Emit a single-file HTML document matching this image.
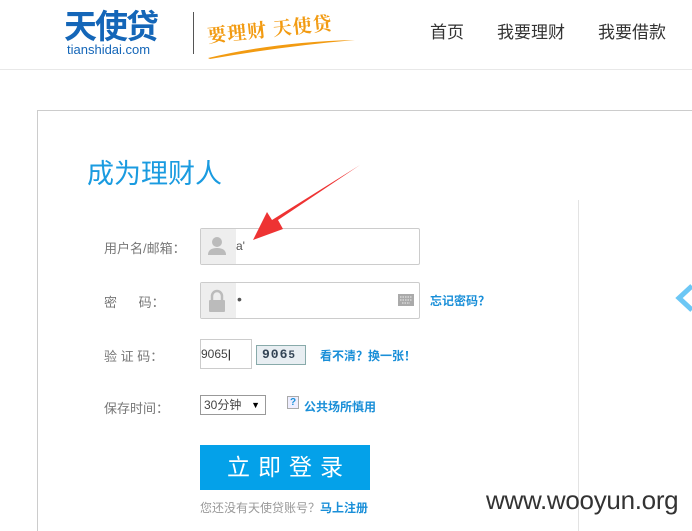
<!DOCTYPE html>
<html style="width:692px;height:531px;overflow:hidden"><head><meta charset="utf-8"><style>
*{margin:0;padding:0;box-sizing:border-box}
body{width:692px;height:531px;overflow:hidden;background:#fff;position:relative;font-family:"Liberation Sans","Noto Sans CJK SC",sans-serif;color:#666}
.a{position:absolute;white-space:nowrap}
.lbl{font-size:13px;color:#777}
.box{position:absolute;border:1px solid #ccc;border-radius:2px;background:#fff}
.ic{position:absolute;left:0;top:0;bottom:0;width:35px;background:#eee}
.lnk{color:#1a8fd8;font-size:12px;font-weight:bold}
</style></head><body>
<div class="a" style="left:64px;top:6px;font-size:33px;font-weight:bold;color:#1466b8;letter-spacing:-2px;font-family:'Noto Sans CJK SC',sans-serif;line-height:36px">天使贷</div>
<div class="a" style="left:67px;top:43px;font-size:13px;color:#1466b8;line-height:14px">tianshidai.com</div>
<div class="a" style="left:193px;top:12px;width:1px;height:42px;background:#555"></div>
<div class="a" style="left:207px;top:15px;font-size:19px;color:#f29b12;font-family:'Noto Serif CJK SC',serif;font-weight:bold;transform:rotate(-6deg);letter-spacing:1px">要理财 天使贷</div>
<svg class="a" style="left:205px;top:30px" width="150" height="30"><path d="M3 28 Q70 12 150 10 Q80 16 5 29Z" fill="#f29b12"/></svg>
<div class="a" style="left:430px;top:18px;font-size:17px;color:#333">首页</div>
<div class="a" style="left:497px;top:18px;font-size:17px;color:#333">我要理财</div>
<div class="a" style="left:598px;top:18px;font-size:17px;color:#333">我要借款</div>
<div class="a" style="left:0;top:69px;width:692px;height:1px;background:#e8e8e8"></div>
<div class="a" style="left:37px;top:110px;width:655px;height:421px;border:1px solid #ccc;border-right:none;border-bottom:none"></div>
<div class="a" style="left:578px;top:200px;width:1px;height:331px;background:#e3e3e3"></div>
<div class="a" style="left:87px;top:157px;font-size:27px;color:#1a9be0;line-height:34px">成为理财人</div>
<svg class="a" style="left:675px;top:284px" width="17" height="28"><path d="M17 2 L4 14 L17 26" stroke="#6cc7f5" stroke-width="5" fill="none"/></svg>
<div class="a lbl" style="left:104px;top:238px">用户名/邮箱：</div>
<div class="a lbl" style="left:104px;top:292px">密&nbsp;&nbsp;&nbsp;&nbsp;&nbsp;&nbsp;码：</div>
<div class="a lbl" style="left:104px;top:346px">验&nbsp;证&nbsp;码：</div>
<div class="a lbl" style="left:104px;top:398px">保存时间：</div>
<div class="box" style="left:200px;top:228px;width:220px;height:37px"><div class="ic">
<svg width="35" height="35"><circle cx="16" cy="13" r="5" fill="#bbb"/><path d="M7 26 Q7 19 16 19 Q25 19 25 26Z" fill="#bbb"/></svg></div>
<span class="a" style="left:35px;top:10px;font-size:12px;color:#555">a'</span></div>
<div class="box" style="left:200px;top:282px;width:220px;height:37px"><div class="ic">
<svg width="35" height="35"><path d="M11 17 V13 A5 5 0 0 1 21 13 V17" stroke="#bbb" stroke-width="2.5" fill="none"/><rect x="8" y="17" width="16" height="12" rx="1" fill="#bbb"/></svg></div>
<span class="a" style="left:36px;top:8px;font-size:14px;color:#555">•</span>
<svg class="a" style="left:197px;top:11px" width="16" height="12"><rect width="16" height="12" fill="#aaa"/><path d="M2 3h12M2 6h12M4 9h8" stroke="#eee" stroke-width="1" stroke-dasharray="1.5 1"/></svg></div>
<div class="a lnk" style="left:430px;top:292px">忘记密码？</div>
<div class="box" style="left:200px;top:339px;width:52px;height:30px;border-radius:0"><span class="a" style="left:0;top:7px;font-size:12px;color:#444">9065<span style="color:#000">|</span></span></div>
<div class="a" style="left:256px;top:345px;width:50px;height:20px;border:1px solid #8aa;background:#e8eef2;font-family:'Liberation Mono',monospace;font-size:13px;font-weight:bold;color:#345;line-height:18px;padding-left:5px;letter-spacing:1px">906<span style="font-size:11px">5</span></div>
<div class="a lnk" style="left:320px;top:347px">看不清？换一张！</div>
<div class="a" style="left:200px;top:395px;width:66px;height:20px;border:1px solid #999;font-size:12px;color:#444;line-height:18px;padding-left:3px">30分钟<span style="position:absolute;right:5px;font-size:9px;color:#000">▼</span></div>
<div class="a" style="left:287px;top:396px;width:12px;height:13px;border:1px solid #aaa;background:#eef;font-size:10px;color:#1a8fd8;text-align:center;line-height:12px;font-weight:bold">?</div>
<div class="a lnk" style="left:304px;top:398px">公共场所慎用</div>
<div class="a" style="left:200px;top:445px;width:170px;height:45px;background:#04a1e9;color:#fff;font-size:23px;text-align:center;line-height:45px;letter-spacing:8px;padding-left:8px">立即登录</div>
<div class="a" style="left:200px;top:499px;font-size:12px;color:#999">您还没有天使贷账号？<span class="lnk">马上注册</span></div>
<div class="a" style="left:486px;top:485px;font-size:26px;color:#333;letter-spacing:-0.3px">www.wooyun.org</div>
<svg class="a" style="left:0;top:0" width="692" height="531"><path d="M360 165 L278 220 L283 229 L253 240 L267 212 L272 220 Z" fill="#ee3333"/></svg>
</body></html>
